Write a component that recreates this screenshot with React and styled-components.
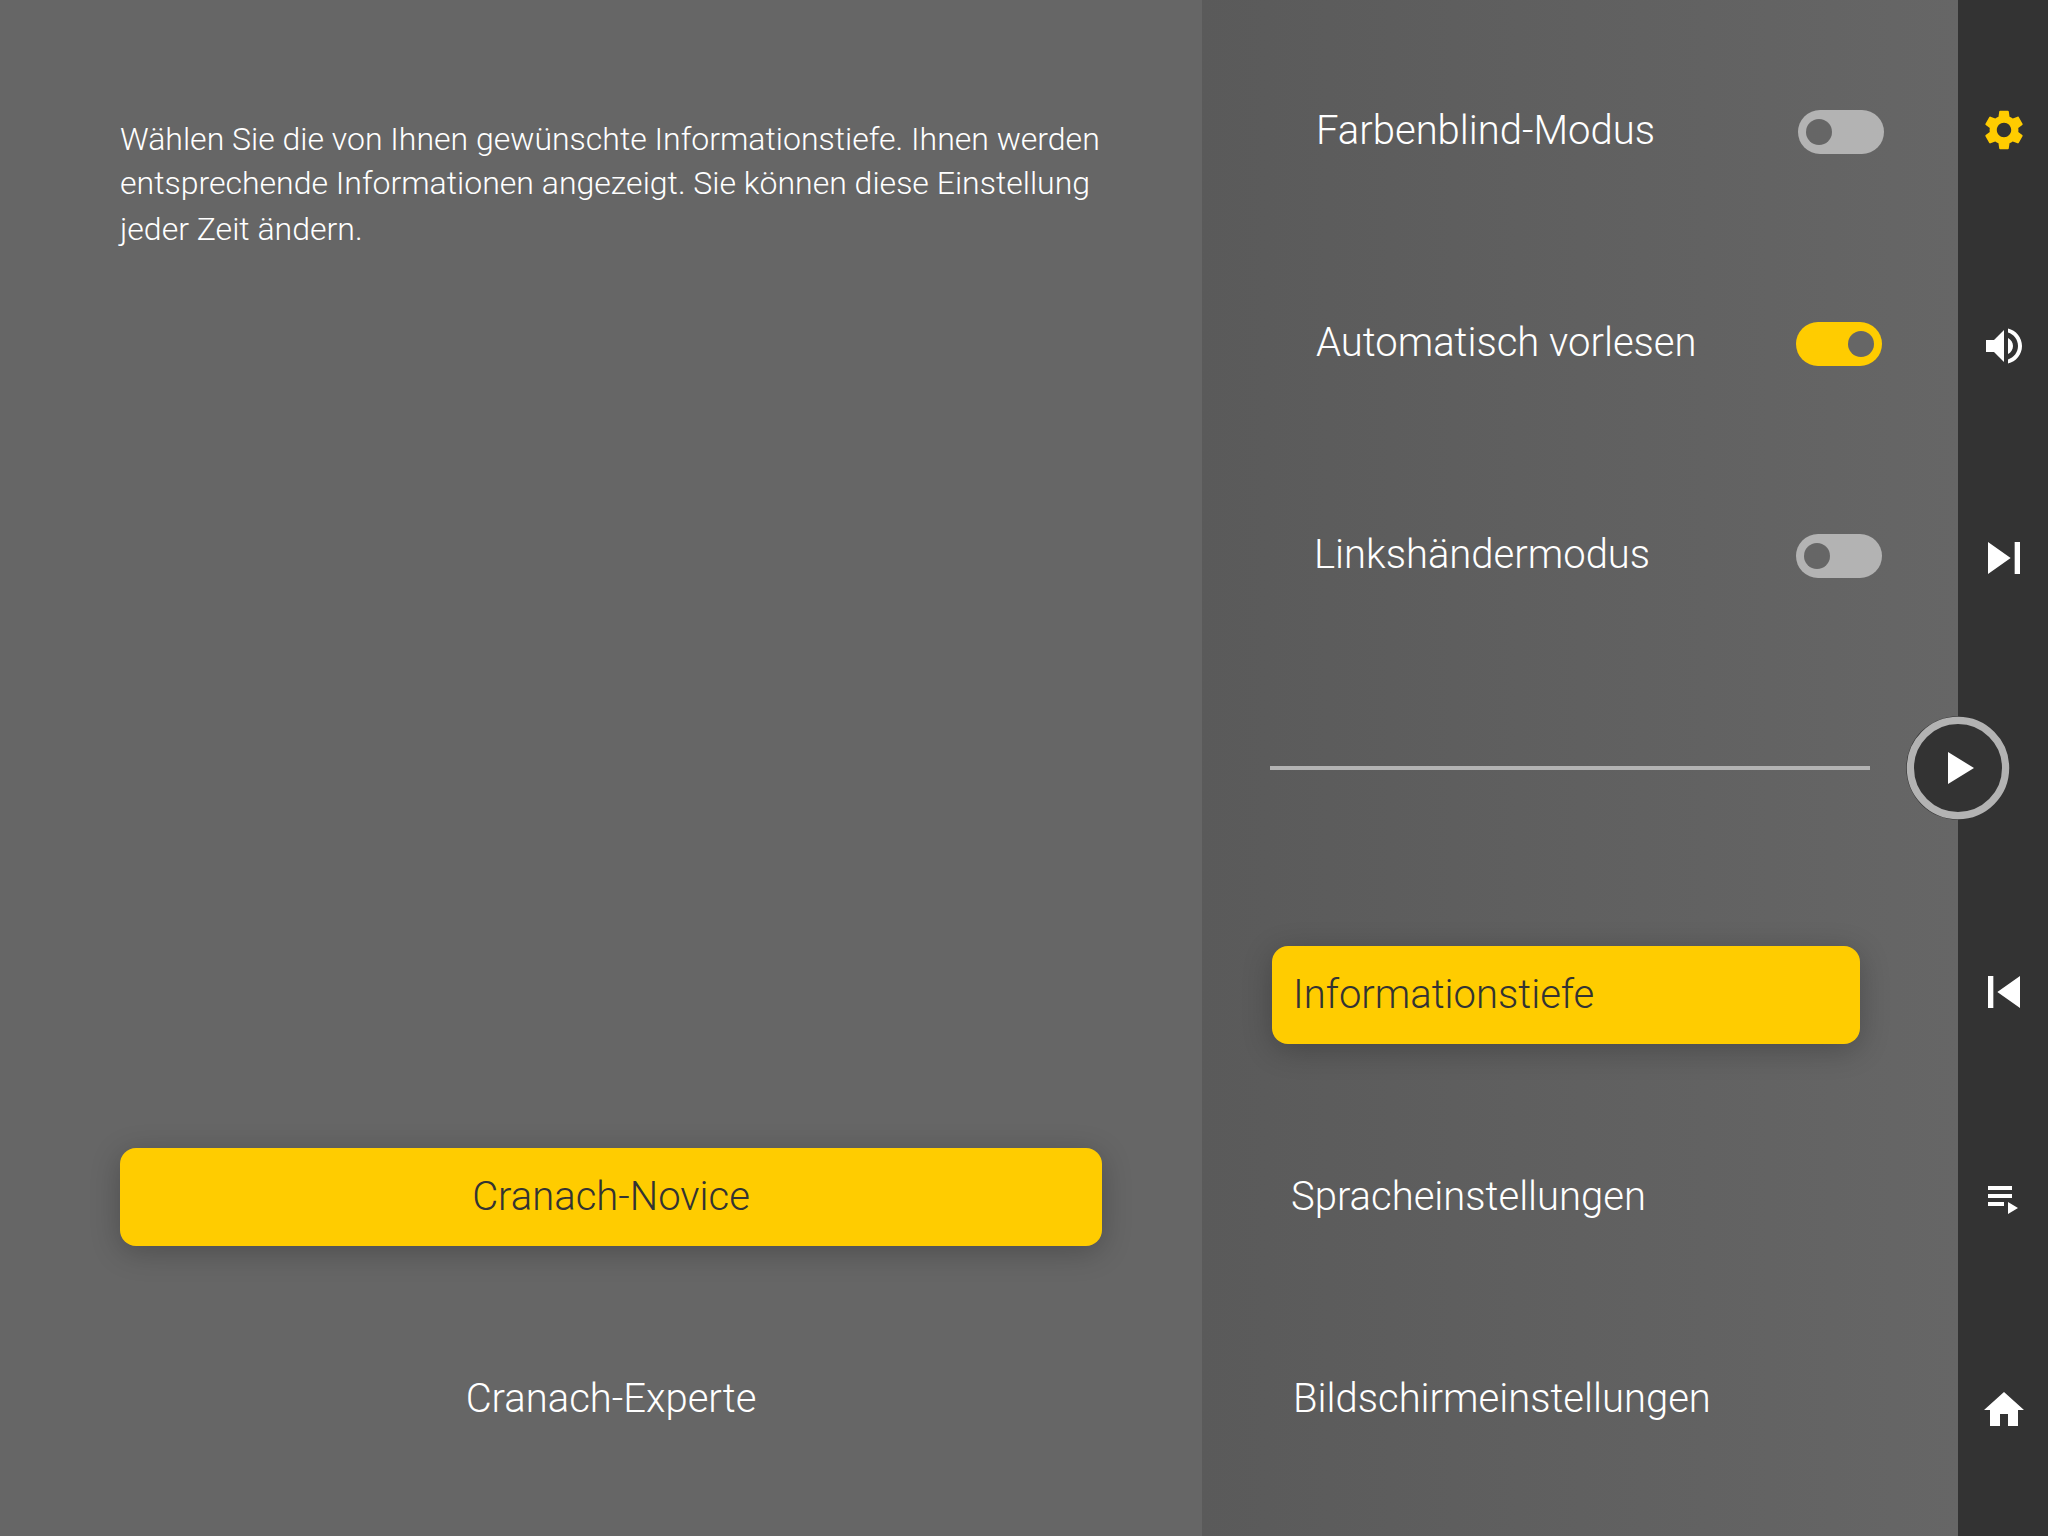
import React, { useState } from "react";
import styled, { createGlobalStyle } from "styled-components";

const GlobalStyle = createGlobalStyle`
  * { box-sizing: border-box; }
  body { margin: 0; background: #666666; }
  button { margin: 0; padding: 0; border: 0; background: none; color: inherit; font: inherit; cursor: pointer; }
`;

const Screen = styled.div`
  display: flex;
  width: 2048px;
  height: 1536px;
  overflow: hidden;
  font-family: Roboto, "Liberation Sans", sans-serif;
  font-weight: 300;
  color: #ffffff;
  background: #666666;
`;

const DetailPane = styled.main`
  width: 1202px;
  padding: 117px 100px 88px 120px;
  display: flex;
  flex-direction: column;
  justify-content: space-between;
`;

const Description = styled.p`
  margin: 0;
  font-size: 32px;
  line-height: 45px;
  white-space: nowrap;
`;

const Line = styled.span`
  display: block;
  height: ${(p) => p.$height}px;
`;

const OptionList = styled.div`
  display: flex;
  flex-direction: column;
  gap: 104px;
`;

const OptionButton = styled.button`
  && {
    display: flex;
    align-items: center;
    justify-content: ${(p) => (p.$centered ? "center" : "flex-start")};
    height: 98px;
    padding: 0 0 1px ${(p) => p.$indent || 0}px;
    border-radius: 16px;
    font-size: 40px;
    line-height: 47px;
    color: ${(p) => (p.$active ? "#333333" : "#ffffff")};
    background: ${(p) => (p.$active ? "#ffcc00" : "transparent")};
    box-shadow: ${(p) => (p.$active ? "0 6px 30px rgba(0, 0, 0, 0.24)" : "none")};
  }
`;

const SettingsPane = styled.aside`
  width: 756px;
  padding: 110px 0 88px 68px;
  display: flex;
  flex-direction: column;
  background: linear-gradient(90deg, #5a5a5a 0%, #666666 100%);
`;

const SwitchList = styled.div`
  display: flex;
  flex-direction: column;
  gap: 168px;
`;

const SwitchRow = styled.div`
  display: flex;
  align-items: center;
  justify-content: space-between;
  height: 44px;
  padding-left: ${(p) => p.$indent}px;
  padding-right: ${(p) => p.$end}px;
`;

const SwitchLabel = styled.span`
  font-size: 40px;
  line-height: 47px;
  padding-bottom: 3px;
`;

const Track = styled.button`
  && {
    display: flex;
    align-items: center;
    justify-content: ${(p) => (p.$on ? "flex-end" : "flex-start")};
    width: 86px;
    height: 44px;
    padding: 0 8px;
    border-radius: 22px;
    background: ${(p) => (p.$on ? "#ffcc00" : "#b3b3b3")};
  }
`;

const Knob = styled.span`
  width: 26px;
  height: 26px;
  border-radius: 50%;
  background: #666666;
`;

const Divider = styled.hr`
  width: 600px;
  height: 4px;
  margin: 188px 0 176px;
  border: 0;
  background: #b3b3b3;
`;

const MenuList = styled(OptionList)`
  width: 588px;
  margin-left: 2px;
`;

const Sidebar = styled.nav`
  width: 90px;
  padding: 22px 0 0 2px;
  display: grid;
  grid-template-rows: 216px 216px 208px 212px 236px 176px 248px;
  grid-template-columns: 88px;
  place-items: center;
  background: #333333;
`;

const IconButton = styled.button`
  && {
    display: flex;
    color: ${(p) => (p.$active ? "#ffcc00" : "#ffffff")};
  }
`;

const PlayButton = styled.button`
  && {
    display: flex;
    justify-self: start;
    margin-left: -54px;
  }
`;

const Glyph = styled.svg`
  display: block;
  width: ${(p) => p.$size}px;
  height: ${(p) => p.$size}px;
  fill: currentColor;
`;

const icons = {
  settings:
    "M19.14 12.94c.04-.3.06-.61.06-.94 0-.32-.02-.64-.07-.94l2.03-1.58c.18-.14.23-.41.12-.61l-1.92-3.32c-.12-.22-.37-.29-.59-.22l-2.39.96c-.5-.38-1.03-.7-1.62-.94l-.36-2.54c-.04-.24-.24-.41-.48-.41h-3.84c-.24 0-.43.17-.47.41l-.36 2.54c-.59.24-1.13.57-1.62.94l-2.39-.96c-.22-.08-.47 0-.59.22L2.74 8.87c-.12.21-.08.47.12.61l2.03 1.58c-.05.3-.09.63-.09.94s.02.64.07.94l-2.03 1.58c-.18.14-.23.41-.12.61l1.92 3.32c.12.22.37.29.59.22l2.39-.96c.5.38 1.03.7 1.62.94l.36 2.54c.05.24.24.41.48.41h3.84c.24 0 .44-.17.47-.41l.36-2.54c.59-.24 1.13-.56 1.62-.94l2.39.96c.22.08.47 0 .59-.22l1.92-3.32c.12-.22.07-.47-.12-.61l-2.01-1.58zM12 15.6c-1.98 0-3.6-1.62-3.6-3.6s1.62-3.6 3.6-3.6 3.6 1.62 3.6 3.6-1.62 3.6-3.6 3.6z",
  volume:
    "M3 9v6h4l5 5V4L7 9H3zm13.5 3c0-1.77-1.02-3.29-2.5-4.03v8.05c1.48-.73 2.5-2.25 2.5-4.02zM14 3.23v2.06c2.89.86 5 3.54 5 6.71s-2.11 5.85-5 6.71v2.06c4.01-.91 7-4.49 7-8.77s-2.99-7.86-7-8.77z",
  next: "M6 18l8.5-6L6 6v12zM16 6v12h2V6h-2z",
  previous: "M6 6h2v12H6zm3.5 6l8.5 6V6z",
  playlist: "M4 10h12v2H4zM4 6h12v2H4zM4 14h8v2H4zM14 14v6l5-3z",
  home: "M10 20v-6h4v6h5v-8h3L12 3 2 12h3v8z",
};

function NavIcon({ name, label, size = 48, active }) {
  return (
    <IconButton $active={active} aria-label={label}>
      <Glyph viewBox="0 0 24 24" $size={size}>
        <path d={icons[name]} />
      </Glyph>
    </IconButton>
  );
}

function Play() {
  return (
    <PlayButton aria-label="Abspielen">
      <Glyph viewBox="0 0 104 104" $size={104}>
        <circle cx="52" cy="52" r="51.8" fill="#333333" />
        <circle cx="52" cy="52" r="47.6" fill="none" stroke="#b3b3b3" strokeWidth="7.2" />
        <path d="M42 36v32l26-16z" fill="#ffffff" />
      </Glyph>
    </PlayButton>
  );
}

const switches = [
  { id: "colour", label: "Farbenblind-Modus", indent: 46, end: 74 },
  { id: "read", label: "Automatisch vorlesen", indent: 46, end: 76 },
  { id: "left", label: "Linkshändermodus", indent: 44, end: 76 },
];

const menu = [
  { label: "Informationstiefe", indent: 21 },
  { label: "Spracheinstellungen", indent: 19 },
  { label: "Bildschirmeinstellungen", indent: 21 },
];

const levels = ["Cranach-Novice", "Cranach-Experte"];

export default function App() {
  const [on, setOn] = useState({ read: true });
  const [section, setSection] = useState(0);
  const [level, setLevel] = useState(0);

  return (
    <>
      <GlobalStyle />
      <Screen>
        <DetailPane>
          <Description>
            <Line $height={44}>Wählen Sie die von Ihnen gewünschte Informationstiefe. Ihnen werden</Line>
            <Line $height={46}>entsprechende Informationen angezeigt. Sie können diese Einstellung</Line>
            <Line $height={45}>jeder Zeit ändern.</Line>
          </Description>
          <OptionList>
            {levels.map((text, i) => (
              <OptionButton key={text} $centered $active={i === level} onClick={() => setLevel(i)}>
                {text}
              </OptionButton>
            ))}
          </OptionList>
        </DetailPane>
        <SettingsPane>
          <SwitchList>
            {switches.map((s) => (
              <SwitchRow key={s.id} $indent={s.indent} $end={s.end}>
                <SwitchLabel>{s.label}</SwitchLabel>
                <Track
                  role="switch"
                  aria-checked={!!on[s.id]}
                  aria-label={s.label}
                  $on={on[s.id]}
                  onClick={() => setOn({ ...on, [s.id]: !on[s.id] })}
                >
                  <Knob />
                </Track>
              </SwitchRow>
            ))}
          </SwitchList>
          <Divider />
          <MenuList>
            {menu.map((m, i) => (
              <OptionButton key={m.label} $indent={m.indent} $active={i === section} onClick={() => setSection(i)}>
                {m.label}
              </OptionButton>
            ))}
          </MenuList>
        </SettingsPane>
        <Sidebar>
          <NavIcon name="settings" label="Einstellungen" active />
          <NavIcon name="volume" label="Lautstärke" />
          <NavIcon name="next" label="Weiter" size={64} />
          <Play />
          <NavIcon name="previous" label="Zurück" size={64} />
          <NavIcon name="playlist" label="Wiedergabeliste" />
          <NavIcon name="home" label="Startseite" />
        </Sidebar>
      </Screen>
    </>
  );
}
